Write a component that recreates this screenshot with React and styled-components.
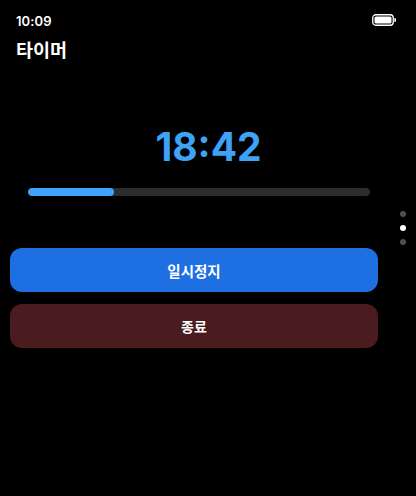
import React from "react";
import styled, { createGlobalStyle } from "styled-components";

const Global = createGlobalStyle`
  html, body { margin: 0; padding: 0; background: #000; }
  body { font-family: Inter, "Noto Sans CJK KR", sans-serif; color: #fff; }
`;

const Screen = styled.div`
  position: relative;
  width: 416px;
  height: 496px;
  background: #000;
  display: flex;
  flex-direction: column;
  overflow: hidden;
`;

const StatusBar = styled.div`
  height: 40px;
  display: flex;
  align-items: center;
  justify-content: space-between;
  padding: 0 20px 0 16px;
  box-sizing: border-box;
`;

const Clock = styled.span`
  font-size: 13px;
  font-weight: 600;
  letter-spacing: 0.1px;
  margin-top: 1px;
`;

const Title = styled.h1`
  margin: 0;
  padding: 0 16px;
  font-family: Inter, "Noto Sans CJK KR", sans-serif;
  font-size: 18.5px;
  font-weight: 700;
  line-height: 20px;
`;

const TimerText = styled.div`
  margin-top: 67px;
  text-align: center;
  font-size: 39px;
  font-weight: 700;
  line-height: 40px;
  color: #3ea2f7;
  padding-left: 1px;
`;

const Track = styled.div`
  margin: 21px 46px 0 28px;
  height: 8px;
  border-radius: 4px;
  background: #2c2c2e;
  overflow: hidden;
`;

const Fill = styled.div`
  height: 100%;
  border-radius: 4px;
  background: #3ea4fb;
`;

const Buttons = styled.div`
  margin: 52px 38px 0 10px;
  display: flex;
  flex-direction: column;
  gap: 12px;
`;

const Button = styled.button`
  height: 44px;
  border: none;
  border-radius: 12px;
  background: ${(p) => p.$bg};
  color: #fff;
  font-family: Inter, "Noto Sans CJK KR", sans-serif;
  font-size: ${(p) => p.$size}px;
  font-weight: 700;
  padding: 0;
`;

const Dots = styled.div`
  position: absolute;
  right: 10px;
  top: 211px;
  display: flex;
  flex-direction: column;
  gap: 8px;
`;

const Dot = styled.span`
  width: 6px;
  height: 6px;
  border-radius: 50%;
  background: ${(p) => (p.$active ? "#ffffff" : "#4f4f51")};
`;

const Battery = () => (
  <svg width="24" height="12" viewBox="0 0 24 12">
    <rect x="0.75" y="0.75" width="20.5" height="10.5" rx="3" fill="none" stroke="#fff" strokeWidth="1.3" />
    <rect x="2.5" y="2.5" width="17" height="7" rx="1.6" fill="#fff" />
    <rect x="22.3" y="4" width="1.6" height="4" rx="0.8" fill="#fff" />
  </svg>
);

export default function App() {
  const progress = 25;
  return (
    <>
      <Global />
      <Screen>
        <StatusBar>
          <Clock>10:09</Clock>
          <Battery />
        </StatusBar>
        <Title>타이머</Title>
        <TimerText>18:42</TimerText>
        <Track>
          <Fill style={{ width: `${progress}%` }} />
        </Track>
        <Buttons>
          <Button $bg="#1d6fe2" $size={14.5}>일시정지</Button>
          <Button $bg="#4a1b1f" $size={14}>종료</Button>
        </Buttons>
        <Dots>
          <Dot />
          <Dot $active />
          <Dot />
        </Dots>
      </Screen>
    </>
  );
}
